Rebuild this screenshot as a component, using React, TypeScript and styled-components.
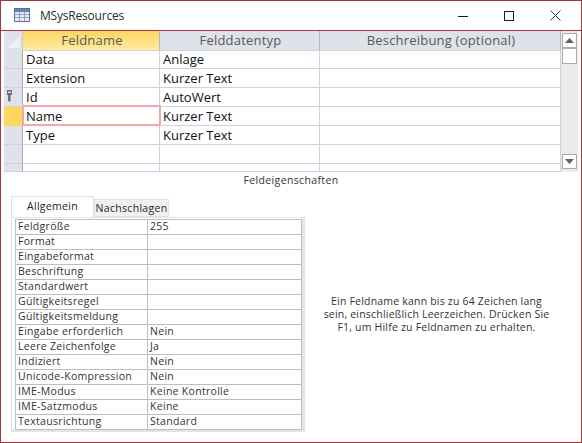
import React from "react";
import styled, { createGlobalStyle } from "styled-components";

const Global = createGlobalStyle`
  html, body { margin: 0; padding: 0; background: #fff; }
  * { box-sizing: border-box; }
`;
const UI = `"Open Sans", "Noto Sans", "Liberation Sans", sans-serif`;

const Win = styled.div`
  width: 582px; height: 443px; border: 1px solid #a4373a; background: #fff;
  display: flex; flex-direction: column; font-family: ${UI}; overflow: hidden;
`;
const TitleBar = styled.div`
  height: 30px; flex: none; border-bottom: 1px solid #a4373a; display: flex; align-items: center;
  padding: 0 3px 0 13px;
`;
const TableIcon = styled.svg`width: 16px; height: 14px; flex: none; margin-top: -1px;`;
const Title = styled.div`font-size: 12px; letter-spacing: -.2px; color: #2b2b2b; margin-left: 10px; flex: 1; margin-top: -1px;`;
const WinBtn = styled.div`width: 46px; height: 29px; display: flex; align-items: center; justify-content: center;`;

const Sheet = styled.div`display: flex; height: 141px; flex: none; margin: 0 3px;`;
const Data = styled.div`width: 557px; flex: none; overflow: hidden;`;
const Row = styled.div`display: grid; grid-template-columns: 19px 137px 160px 241px; height: 19px;`;
const PartialRow = styled(Row)`height: 8px;`;
const Corner = styled.div`background: #dfe2e8; border-right: 1px solid #c6cbd5; border-bottom: 1px solid #cdd3de; display: flex; align-items: center; justify-content: center;`;
const Head = styled.div<{ $active?: boolean }>`
  background: ${p => p.$active ? "linear-gradient(#fdd565, #ffeb9f)" : "#dfe2e8"};
  border-right: 1px solid #b4b8bf; border-bottom: 1px solid #cdd3de;
  font-size: 13px; color: #58595c; text-align: center; line-height: 19px; letter-spacing: .2px; padding-left: 2px;
`;
const Selector = styled.div<{ $active?: boolean }>`
  background: ${p => p.$active ? "#ffd75e" : "#dfe2e8"};
  border-right: 1px solid #a9aeb8; border-bottom: 1px solid ${p => p.$active ? "#ffd75e" : "#cdd3de"};
  display: flex; align-items: flex-start; justify-content: flex-start; padding: 2px 0 0 3px;
`;
const Cell = styled.div<{ $focus?: boolean }>`
  position: relative; border-right: 1px solid #ccd4e4; border-bottom: 1px solid #ccd4e4;
  font-size: 13px; color: #111; line-height: 18px; padding-left: 3px; white-space: nowrap;
  ${p => p.$focus ? `&::after { content: ""; position: absolute; left: -1px; top: -2px; right: -2px; bottom: -1px; border: 2px solid #f5a6aa; }` : ""}
`;
const Scroll = styled.div`
  width: 17px; flex: none; background: #ebebeb; display: flex; flex-direction: column;
  padding: 2px 1px 3px 1px;
`;
const ScrollBtn = styled.div`
  width: 15px; height: 15px; background: #fff; border: 1px solid #ababab; display: flex; align-items: center; justify-content: center;
`;
const ScrollThumb = styled(ScrollBtn)`height: 16px;`;
const ScrollDown = styled(ScrollBtn)`margin-top: auto;`;

const SectionTitle = styled.div`font-size: 10.5px; color: #333; text-align: center; height: 25px; line-height: 16px; flex: none; letter-spacing: .36px;`;

const Lower = styled.div`display: flex; flex: 1; padding-left: 10px; min-height: 0;`;
const Left = styled.div`width: 294px; flex: none; display: flex; flex-direction: column;`;
const Tabs = styled.div`display: flex; align-items: flex-end; height: 20px; flex: none;`;
const Tab = styled.div<{ $active?: boolean }>`
  width: ${p => p.$active ? 83 : 75}px; height: ${p => p.$active ? 21 : 18}px;
  font-size: 10.5px; text-align: center; letter-spacing: .3px;
  color: ${p => p.$active ? "#222" : "#1e1e1e"}; line-height: ${p => p.$active ? 19 : 17}px;
  background: ${p => p.$active ? "#fff" : "#f0f0f0"};
  border: 1px solid #e2e2e2; border-bottom: ${p => p.$active ? "0" : "1px solid #e2e2e2"};
  position: relative; z-index: ${p => p.$active ? 1 : 0};
`;
const Panel = styled.div`
  background: #fff; border: 1px solid #e4e4e4; border-right-width: 3px; border-bottom-width: 3px;
  padding: 1px 0 0 3px; height: 215px; width: 294px;
`;
const Props = styled.div`width: 287px; border: 1px solid #bdbdbd; border-bottom: 0;`;
const PropRow = styled.div`display: grid; grid-template-columns: 132px 1fr; height: 15px; border-bottom: 1px solid #bdbdbd;`;
const PropName = styled.div`font-size: 10.5px; color: #333; line-height: 13px; padding-left: 2px; border-right: 1px solid #bdbdbd; letter-spacing: .3px; white-space: nowrap;`;
const PropValue = styled.div`font-size: 10.5px; color: #333; line-height: 13px; padding-left: 2px; letter-spacing: .3px; white-space: nowrap;`;
const Help = styled.div`
  flex: 1; text-align: center; font-size: 10.5px; color: #333; line-height: 13px; letter-spacing: .2px;
  padding: 98px 30px 0 17px;
`;

const rows: [string, string][] = [
  ["Data", "Anlage"], ["Extension", "Kurzer Text"], ["Id", "AutoWert"], ["Name", "Kurzer Text"], ["Type", "Kurzer Text"], ["", ""],
];
const props: [string, string][] = [
  ["Feldgröße", "255"], ["Format", ""], ["Eingabeformat", ""], ["Beschriftung", ""], ["Standardwert", ""], ["Gültigkeitsregel", ""],
  ["Gültigkeitsmeldung", ""], ["Eingabe erforderlich", "Nein"], ["Leere Zeichenfolge", "Ja"], ["Indiziert", "Nein"],
  ["Unicode-Kompression", "Nein"], ["IME-Modus", "Keine Kontrolle"], ["IME-Satzmodus", "Keine"], ["Textausrichtung", "Standard"],
];

export default function App() {
  return (
    <Win>
      <Global />
      <TitleBar>
        <TableIcon viewBox="0 0 16 14">
          <rect x="0.5" y="0.5" width="15" height="13" fill="#e4ebf7" stroke="#5c7099" />
          <rect x="1" y="1" width="14" height="3" fill="#6c82ad" />
          <path d="M1 6.5H15M1 9.5H15M5.5 4V13M10.5 4V13" stroke="#8fa3c7" fill="none" />
        </TableIcon>
        <Title>MSysResources</Title>
        <WinBtn><svg width="10" height="10"><path d="M0 5.5H10" stroke="#1a1a1a" /></svg></WinBtn>
        <WinBtn><svg width="10" height="10"><rect x=".5" y=".5" width="9" height="9" fill="none" stroke="#1a1a1a" /></svg></WinBtn>
        <WinBtn><svg width="11" height="11"><path d="M.5 .5L10.5 10.5M10.5 .5L.5 10.5" stroke="#333" fill="none" /></svg></WinBtn>
      </TitleBar>
      <Sheet>
        <Data>
          <Row>
            <Corner><svg width="14" height="14"><path d="M14 2V14H1Z" fill="#eef0f3" /></svg></Corner>
            <Head $active>Feldname</Head>
            <Head>Felddatentyp</Head>
            <Head>Beschreibung (optional)</Head>
          </Row>
          {rows.map(([a, b]) => (
            <Row key={a || "empty"}>
              <Selector $active={a === "Name"}>
                {a === "Id" && (
                  <svg width="5" height="12" viewBox="0 0 5 12">
                    <path d="M0 0H5V5H3.5V11.5H2V11H1V5H0Z" fill="#6b6f76" />
                    <path d="M1 1.5H4V3H1Z" fill="#d6d8dc" />
                  </svg>
                )}
              </Selector>
              <Cell $focus={a === "Name"}>{a}</Cell>
              <Cell>{b}</Cell>
              <Cell />
            </Row>
          ))}
          <PartialRow><Selector /><Cell /><Cell /><Cell /></PartialRow>
        </Data>
        <Scroll>
          <ScrollBtn><svg width="9" height="5"><path d="M4.5 0L9 5H0Z" fill="#606060" /></svg></ScrollBtn>
          <ScrollThumb />
          <ScrollDown><svg width="9" height="5"><path d="M0 0H9L4.5 5Z" fill="#606060" /></svg></ScrollDown>
        </Scroll>
      </Sheet>
      <SectionTitle>Feldeigenschaften</SectionTitle>
      <Lower>
        <Left>
          <Tabs><Tab $active>Allgemein</Tab><Tab>Nachschlagen</Tab></Tabs>
          <Panel>
            <Props>
              {props.map(([n, v]) => (
                <PropRow key={n}><PropName>{n}</PropName><PropValue>{v}</PropValue></PropRow>
              ))}
            </Props>
          </Panel>
        </Left>
        <Help>Ein Feldname kann bis zu 64 Zeichen lang sein, einschließlich Leerzeichen. Drücken Sie F1, um Hilfe zu Feldnamen zu erhalten.</Help>
      </Lower>
    </Win>
  );
}
